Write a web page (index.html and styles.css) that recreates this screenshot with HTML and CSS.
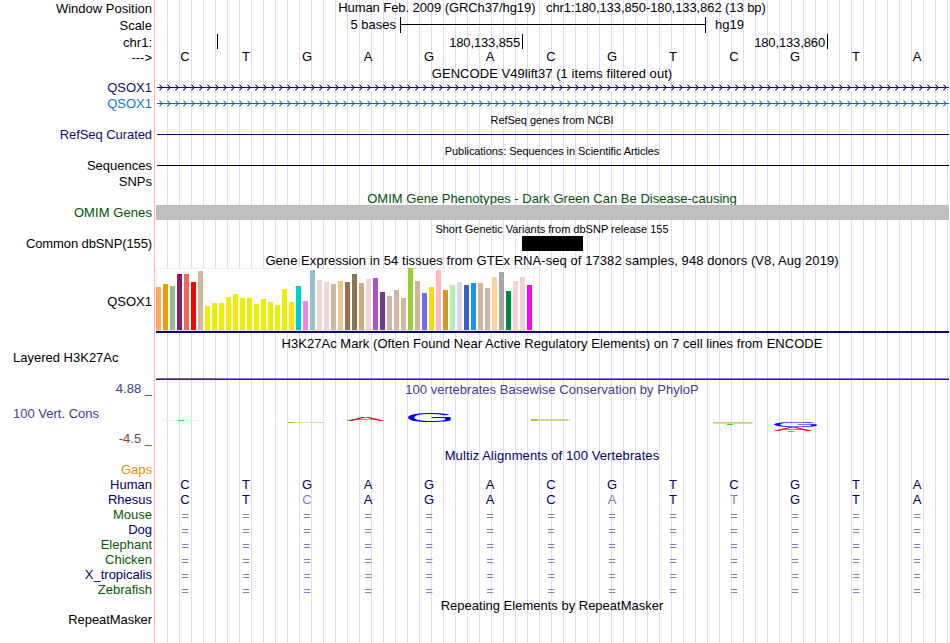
FILE: index.html
```html
<!DOCTYPE html>
<html lang="en">
<head>
<meta charset="utf-8">
<title>Genome Browser chr1:180,133,850-180,133,862</title>
<link rel="stylesheet" href="styles.css">
</head>
<body>
<main class="browser">
  <aside class="labels">
    <div>Window Position</div>
    <div>Scale</div>
    <div>chr1:</div>
    <div>---&gt;</div>
    <div class="navy">QSOX1</div>
    <div class="sky">QSOX1</div>
    <div class="navy tight">RefSeq Curated</div>
    <div>Sequences</div>
    <div>SNPs</div>
    <div class="green loose">OMIM Genes</div>
    <div class="tighter">Common dbSNP(155)</div>
    <div>QSOX1</div>
    <div class="wide">Layered H3K27Ac</div>
    <div class="slate">4.88 _</div>
    <div class="slate wide">100 Vert. Cons</div>
    <div class="brown">-4.5 _</div>
    <div class="orange">Gaps</div>
    <div class="deep">Human</div>
    <div class="deep">Rhesus</div>
    <div class="forest">Mouse</div>
    <div class="deep">Dog</div>
    <div class="forest">Elephant</div>
    <div class="forest">Chicken</div>
    <div class="deep">X_tropicalis</div>
    <div class="forest">Zebrafish</div>
    <div class="tight">RepeatMasker</div>
  </aside>
  <section class="tracks">
    <div class="title"><span class="t-pos">Human Feb. 2009 (GRCh37/hg19) &nbsp; chr1:180,133,850-180,133,862 (13 bp)</span></div>
    <div class="scale"><span class="scale-len">5 bases</span><span class="scale-bar"></span><span class="scale-db">hg19</span></div>
    <div class="ruler"><span></span><span>180,133,855</span><span>180,133,860</span></div>
    <div class="bases" data-seq="CTGAGACGTCGTA"></div>
    <div class="title"><span class="t-gencode">GENCODE V49lift37 (1 items filtered out)</span></div>
    <svg class="gene navy" width="794" height="16"><defs><pattern id="chevrons" width="8" height="16" patternUnits="userSpaceOnUse"><path d="M5 5h1v1h-1zM6 6h1v1h-1zM7 7h1v1h-1zM6 8h1v1h-1zM5 9h1v1h-1z" fill="#0c0c78"/><path d="M4 4h1v1h-1zM4 10h1v1h-1zM5 6h1v1h-1zM5 8h1v1h-1zM4 5h1v1h-1zM4 9h1v1h-1z" fill="#0c0c78" opacity=".35"/></pattern></defs><path d="M2 7h792v1h-792z" fill="#0c0c78"/><rect x="2" width="792" height="16" fill="url(#chevrons)"/></svg>
    <svg class="gene sky" width="794" height="16"><defs><pattern id="chevrons-sky" width="8" height="16" patternUnits="userSpaceOnUse"><path d="M5 5h1v1h-1zM6 6h1v1h-1zM7 7h1v1h-1zM6 8h1v1h-1zM5 9h1v1h-1z" fill="#0c6eb4"/><path d="M4 4h1v1h-1zM4 10h1v1h-1zM5 6h1v1h-1zM5 8h1v1h-1zM4 5h1v1h-1zM4 9h1v1h-1z" fill="#0c6eb4" opacity=".35"/></pattern></defs><path d="M2 7h792v1h-792z" fill="#0c6eb4"/><rect x="2" width="792" height="16" fill="url(#chevrons-sky)"/></svg>
    <div class="title small"><span class="t-refseq">RefSeq genes from NCBI</span></div>
    <div class="line navy"></div>
    <div class="title small"><span class="t-pubs">Publications: Sequences in Scientific Articles</span></div>
    <div class="line"></div>
    <div></div>
    <div class="title green"><span class="t-omim">OMIM Gene Phenotypes - Dark Green Can Be Disease-causing</span></div>
    <div class="omim-bar"></div>
    <div class="title small snp-title"><span>Short Genetic Variants from dbSNP release 155</span></div>
    <div class="snp"></div>
    <div class="title gtex-title"><span class="t-gtex">Gene Expression in 54 tissues from GTEx RNA-seq of 17382 samples, 948 donors (V8, Aug 2019)</span></div>
    <div class="gtex"><div class="gtex-chart"></div></div>
    <div class="title h3k-title"><span class="t-h3k">H3K27Ac Mark (Often Found Near Active Regulatory Elements) on 7 cell lines from ENCODE</span></div>
    <div class="signal"></div>
    <div class="title slate phylo-title"><span class="t-phylo">100 vertebrates Basewise Conservation by PhyloP</span></div>
    <svg class="logo" width="794" height="51" viewBox="155 395 794 51">
      <path d="M162 420h37v1h-37z" fill="#dcffdc"/><path d="M178 420h6v1h-6z" fill="#14e614"/>
      <path d="M287 422h38v1h-38z" fill="#dcdc96"/><path d="M288 422h6v1h-6z" fill="#b4b43c"/>
      <text transform="translate(346 421) scale(.59 .05)" fill="#f00">A</text>
      <text transform="translate(404.8 421.8) scale(.65 .133)" fill="#00f">G</text>
      <path d="M531 419h39l-3 1h3v1h-39z" fill="#d2d28c"/><path d="M531 419h7v2h-7z" fill="#bebe50"/>
      <path d="M713 422h40v1h-40z" fill="#c8c878"/><path d="M713 423h39v1h-39z" fill="#dcdca0"/><path d="M727 424h6v1h-6z" fill="#0f0"/>
      <text transform="translate(770.8 426.8) scale(.65 .068)" fill="#00f">G</text>
      <text transform="translate(773 431) scale(.6 .06)" fill="#f00">A</text>
      <path d="M788 431h6v1h-6z" fill="#0f0"/>
    </svg>
    <div class="title deep multiz-title"><span class="t-multiz">Multiz Alignments of 100 Vertebrates</span></div>
    <div class="bases deep" data-seq="CTGAGACGTCGTA"></div>
    <div class="bases deep" data-seq="CTcAGACaTtGTA"></div>
    <div class="bases deep gap" data-seq="============="></div>
    <div class="bases deep gap" data-seq="============="></div>
    <div class="bases deep gap" data-seq="============="></div>
    <div class="bases deep gap" data-seq="============="></div>
    <div class="bases deep gap" data-seq="============="></div>
    <div class="bases deep gap" data-seq="============="></div>
    <div class="title repeat-title"><span>Repeating Elements by RepeatMasker</span></div>
  </section>
</main>
<script src="tracks.js"></script>
</body>
</html>
```
FILE: styles.css
```css
* { box-sizing: border-box; }
body { margin: 0; background: #fff; color: #000; font: 13px/15px "Liberation Sans", Arial, sans-serif; overflow: hidden; }
.browser { display: grid; grid-template-columns: 155px 794px; height: 643px; }
.labels {
  display: grid; padding: 1px 2px 0 0; border-right: 1px solid #ffb4b4; text-align: right; white-space: nowrap;
  grid-template-rows: 17px 17px 15px 30px 16px 31px 31px 16px 31px 31px 58px 56px 31px 25px 25px 31px repeat(8, 15px) 30px 30px;
}
.labels .wide { text-align: left; padding-left: 13px; }
.tight { letter-spacing: -.07px; }
.tighter { letter-spacing: -.11px; }
.loose { letter-spacing: .08px; }
.tracks {
  display: grid; white-space: nowrap;
  grid-template-rows: 17px 17px 15px 17px 14px 16px 16px 15px 16px 15px 16px 17px 14px 15px 16px 15px 17px 65px 20px 27px 15px 51px 31px repeat(8, 15px) 46px;
  background: linear-gradient(#fff, #fff) 0 0 / 1px 100% no-repeat, linear-gradient(90deg, #dcdcff 1px, transparent 1px) 0 0 / 12px 100%;
}
.navy { color: #0c0c78; }
.sky { color: #0c78be; }
.green { color: #005000; }
.slate { color: #3c3c8c; }
.brown { color: #783c3c; }
.orange { color: #e68c00; }
.deep { color: #000064; }
.forest { color: #005a00; }

.title { text-align: center; }
.small { font-size: 11px; line-height: 12px; padding-top: 2px; }
.snp-title { padding-top: 3px; }
.gtex-title { padding-top: 2px; }
.h3k-title { padding-top: 3px; }
.phylo-title { padding-top: 2px; }
.multiz-title { padding-top: 2px; }
.repeat-title { padding-top: 1px; }
.t-pos { letter-spacing: -.08px; }
.t-gencode { letter-spacing: .05px; }
.t-refseq { letter-spacing: -.05px; }
.t-pubs { letter-spacing: -.07px; }
.t-omim { letter-spacing: .02px; }
.t-gtex { letter-spacing: .066px; }
.t-h3k { letter-spacing: .04px; }
.t-phylo { letter-spacing: .03px; }
.t-multiz { letter-spacing: .1px; }

.scale { display: flex; }
.scale-len { width: 245px; padding-right: 4px; text-align: right; }
.scale-bar { width: 306px; height: 16px; border: solid #000; border-width: 0 1px; background: linear-gradient(#000, #000) 0 7px / 100% 1px no-repeat; }
.scale-db { padding-left: 9px; }
.ruler { display: flex; }
.ruler span { width: 305px; height: 15px; padding: 1px 2px 0 0; border-right: 1px solid #000; text-align: right; letter-spacing: -.13px; }
.ruler span:first-child { width: 63px; }

.bases { display: grid; grid-template-columns: repeat(13, 61px); margin-left: -1px; padding-left: .5px; text-align: center; }
.bases .mismatch, .gap { color: #8080b4; }
.gap { padding-top: 1px; }
.gene { display: block; shape-rendering: crispEdges; }
.line { height: 1px; margin: 7px 0 0 2px; background: currentColor; }
.omim-bar { margin-left: 1px; background: #bebebe; }
.snp { width: 61px; margin-left: 367px; background: #000; }

.gtex { margin-left: 1px; border-bottom: 2px solid #0c0c78; }
.gtex-chart { display: flex; align-items: flex-end; gap: 2px; width: 378px; height: 63px; padding-bottom: 1px; background: #fff; box-shadow: inset 0 -1px #dcdcdc, inset 0 0 0 1px #f0f0f0; }
.gtex-chart i { width: 5px; }
.signal { height: 2px; margin: 25px 0 0 1px; background: linear-gradient(90deg, #6e6e78 61px, #7878ff 61px) 0 0 / 100% 1px no-repeat, #5a1464; }
.logo { display: block; }
.logo text { font-size: 100px; }
```
FILE: tracks.js
```js
// Median expression per tissue: bar height in pixels and tissue colour.
const tissues = [
  [43, '#ffaa56'], [46, '#ee9a00'], [44, '#8fbc8f'], [56, '#8b1c62'], [56, '#ee6a50'], [48, '#ff0000'], [59, '#cdb79e'],
  ...[24, 27, 27, 33, 36, 32, 32, 26, 31, 28, 25, 41, 28].map(h => [h, '#eeee00']),
  [44, '#00cdcd'], [29, '#ee82ee'], [60, '#9ac0cd'], [50, '#eed5d2'], [48, '#eed5d2'], [46, '#cdb79e'], [49, '#eec591'],
  [48, '#8b7355'], [56, '#8b7355'], [47, '#cdaa7d'], [51, '#eed5d2'], [52, '#b452cd'], [38, '#7a378b'], [34, '#cdb79e'],
  [40, '#cdb79e'], [32, '#cdb79e'], [62, '#9acd32'], [49, '#cdb79e'], [37, '#7a67ee'], [43, '#ffd700'], [60, '#ffb6c1'],
  [40, '#cd9b1d'], [45, '#b4eeb4'], [48, '#d9d9d9'], [45, '#3a5fcd'], [47, '#1e90ff'], [47, '#cdb79e'], [42, '#cdb79e'],
  [53, '#ffd39b'], [58, '#a6a6a6'], [39, '#008b45'], [49, '#eed5d2'], [53, '#eed5d2'], [45, '#ff00ff']
];
document.querySelector('.gtex-chart').innerHTML =
  tissues.map(([h, c]) => `<i style="height:${h}px;background:${c}"></i>`).join('');

// Lowercase letters mark bases that differ from the human sequence.
document.querySelectorAll('.bases').forEach(row => {
  row.innerHTML = [...row.dataset.seq].map(b =>
    /[a-z]/.test(b) ? `<span class="mismatch">${b.toUpperCase()}</span>` : `<span>${b}</span>`).join('');
});
```
